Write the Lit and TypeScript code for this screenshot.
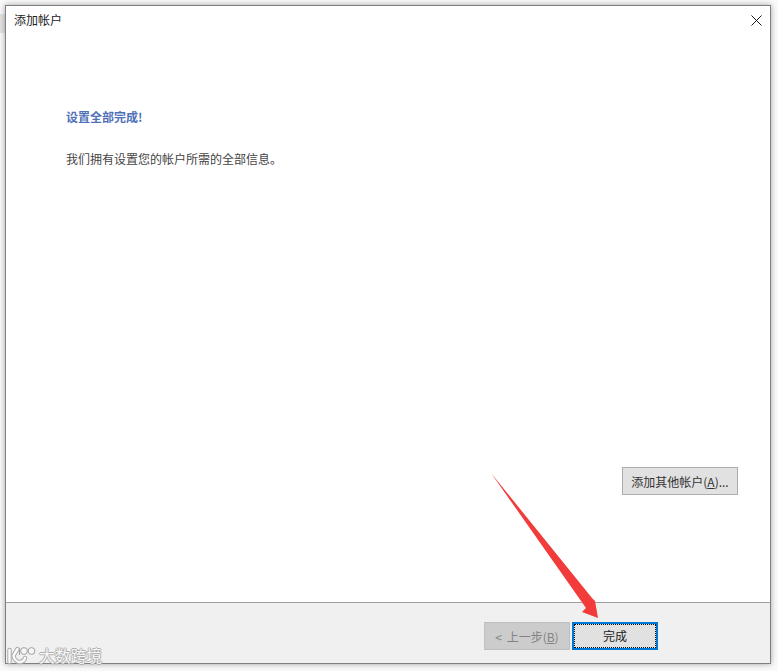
import { LitElement, html, css } from "lit";
import { customElement } from "lit/decorators.js";

@customElement("app-root")
export class AppRoot extends LitElement {
  static styles = css`
    :host {
      display: block;
      position: relative;
      width: 778px;
      height: 671px;
      overflow: hidden;
      background: #fafafa;
      font-family: "Noto Sans CJK SC", "Liberation Sans", sans-serif;
      font-size: 12px;
      color: #333;
    }
    .page {
      box-sizing: border-box;
      height: 671px;
      padding: 5px 7px 7px 5px;
      display: flex;
    }
    .strip {
      position: absolute;
      left: 0;
      top: 14px;
      width: 5px;
      height: 19px;
      background: #e3e3e3;
    }
    .window {
      flex: 1;
      display: flex;
      flex-direction: column;
      border: 1px solid #7f7f7f;
      background: #fff;
      box-shadow: 0 0 6px rgba(0, 0, 0, 0.35);
      position: relative;
    }
    .titlebar {
      height: 28px;
      display: flex;
      align-items: center;
      justify-content: space-between;
      padding: 0 8px 0 8px;
      color: #222;
      line-height: 28px;
    }
    .close {
      width: 11px;
      height: 11px;
      display: block;
    }
    .main {
      flex: 1;
      display: flex;
      flex-direction: column;
      padding: 73px 32px 0 60px;
    }
    .heading {
      font-weight: 700;
      color: #4f71b8;
      line-height: 20px;
    }
    .info {
      margin-top: 22px;
      color: #444;
      line-height: 20px;
    }
    .add-row {
      margin-top: 298px;
      display: flex;
      justify-content: flex-end;
    }
    .footer {
      height: 61px;
      box-sizing: border-box;
      border-top: 1px solid #a0a0a0;
      background: #f0f0f0;
      display: flex;
      justify-content: flex-end;
      gap: 2px;
      padding: 19px 112px 0 0;
    }
    button {
      font: inherit;
      box-sizing: border-box;
      height: 28px;
      padding: 0;
      color: #333;
      background: #e1e1e1;
      border: 1px solid #adadad;
    }
    .add {
      width: 116px;
    }
    .add u {
      text-underline-offset: 1px;
    }
    .back {
      width: 86px;
      background: #cccccc;
      border-color: #bfbfbf;
      color: #838383;
      word-spacing: 2px;
    }
    .finish {
      width: 86px;
      border: 2px solid #0078d7;
      background: #e1e1e1;
      color: #222;
      display: flex;
      padding: 0;
    }
    .finish span {
      flex: 1;
      border: 1px dotted #111;
      line-height: 22px;
    }
    .overlay {
      position: absolute;
      left: 0;
      top: 0;
      pointer-events: none;
    }
    .mark {
      position: absolute;
      left: 7px;
      top: 646px;
      display: flex;
      align-items: flex-end;
      gap: 2px;
    }
    .mark svg {
      display: block;
    }
    .mark-text {
      font-size: 15.75px;
      line-height: 20px;
      color: #f6f6f6;
      text-shadow: -1px 0 0 #b0b0b0, 1px 0 0 #b0b0b0, 0 -1px 0 #b0b0b0, 0 1px 0 #b0b0b0;
    }
  `;

  render() {
    return html`
      <div class="strip"></div>
      <div class="page">
        <div class="window">
          <div class="titlebar">
            <span>添加帐户</span>
            <svg class="close" viewBox="0 0 11 11" fill="none" stroke="#1a1a1a" stroke-width="1">
              <path d="M0.5 0.5 L10.5 10.5 M10.5 0.5 L0.5 10.5" />
            </svg>
          </div>
          <div class="main">
            <div class="heading">设置全部完成!</div>
            <div class="info">我们拥有设置您的帐户所需的全部信息。</div>
            <div class="add-row">
              <button class="add">添加其他帐户(<u>A</u>)...</button>
            </div>
          </div>
          <div class="footer">
            <button class="back">&lt; 上一步(<u>B</u>)</button>
            <button class="finish"><span>完成</span></button>
          </div>
        </div>
      </div>
      <svg class="overlay" width="778" height="671" viewBox="0 0 778 671">
        <path
          d="M491 473 L592 598 L595 601 L598 618 L582 612 L586 608 Z"
          fill="#f23b3b"
        />
      </svg>
      <div class="mark">
        <svg width="30" height="20" viewBox="0 0 30 20" fill="none">
          <g stroke="#aaaaaa" stroke-width="4.4" stroke-linecap="round">
            <path d="M2.5 4 V16" />
            <path d="M10.5 3 L6.5 9.5 C7 13 9.5 16 12.5 16 C15 16 17 15 18 12" />
          </g>
          <g stroke="#fafafa" stroke-width="2.4" stroke-linecap="round">
            <path d="M2.5 4 V16" />
            <path d="M10.5 3 L6.5 9.5 C7 13 9.5 16 12.5 16 C15 16 17 15 18 12" />
          </g>
          <g stroke="#a0a0a0" stroke-width="1">
            <path d="M12.5 2 V9" />
            <circle cx="17" cy="5" r="3.4" fill="#f6f6f6" />
            <circle cx="24.5" cy="5" r="3.4" fill="#f6f6f6" />
          </g>
        </svg>
        <span class="mark-text">大数跨境</span>
      </div>
    `;
  }
}
